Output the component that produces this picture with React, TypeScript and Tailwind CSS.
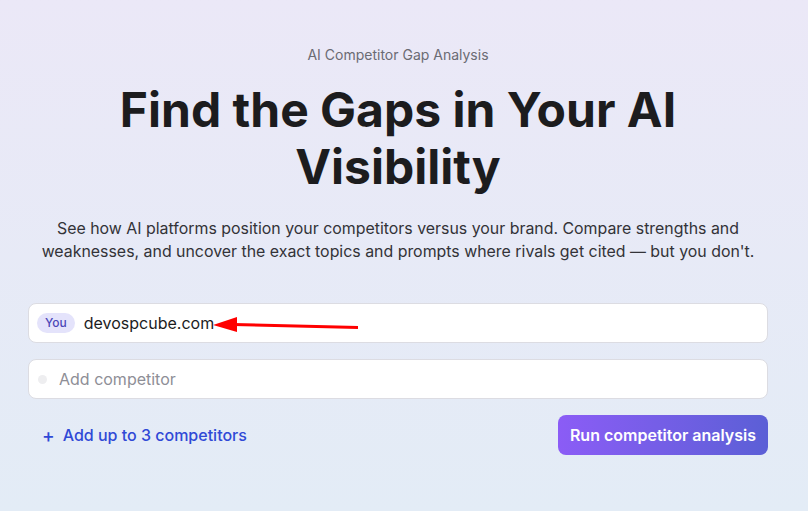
import React, { useState } from "react";

const App: React.FC = () => {
  const [competitor, setCompetitor] = useState("");

  return (
    <div
      className="min-h-[511px] w-full bg-gradient-to-b from-[#ebe8f7] to-[#e3ecf6] text-[#1c1c1e]"
      style={{ fontFamily: "Inter, 'Noto Sans', sans-serif" }}
    >
      <div className="ml-[28px] flex w-[740px] flex-col items-center pt-[45px]">
        <p className="text-[14px] leading-[20px] text-[#6b6b73]">AI Competitor Gap Analysis</p>

        <h1 className="mt-[16px] text-center text-[48px] font-bold leading-[57px] text-[#1c1c1e]">
          Find the Gaps in Your AI
          <br />
          Visibility
        </h1>

        <p className="mt-[22px] text-center text-[15.9px] leading-[23px] text-[#333338]">
          See how AI platforms position your competitors versus your brand. Compare strengths and
          weaknesses, and uncover the exact topics and prompts where rivals get cited — but you don't.
        </p>

        <div className="mt-[40px] flex w-full flex-col gap-[16px]">
          <div className="relative flex h-[40px] items-center gap-[9px] rounded-lg border border-[#dcdce2] bg-white px-[8px]">
            <span className="rounded-full bg-[#e4e3fb] px-[8px] py-[2px] text-[12px] font-medium leading-[16px] text-[#4b46b8]">
              You
            </span>
            <span className="text-[16px] text-[#1c1c1e]">devospcube.com</span>
            <svg
              className="absolute left-[184px] top-[12px]"
              width="146"
              height="18"
              viewBox="0 0 146 18"
            >
              <line x1="20" y1="8.5" x2="145" y2="11.5" stroke="#ff0000" strokeWidth="3" />
              <polygon points="0,9 24,1 24,16" fill="#ff0000" />
            </svg>
          </div>

          <div className="flex h-[40px] items-center gap-[12px] rounded-lg border border-[#dcdce2] bg-white px-[8px]">
            <span className="ml-[1px] h-[9px] w-[9px] rounded-full bg-[#eeeef0]" />
            <input
              value={competitor}
              onChange={(e) => setCompetitor(e.target.value)}
              placeholder="Add competitor"
              className="flex-1 bg-transparent text-[16px] text-[#1c1c1e] outline-none placeholder:text-[#8e8e96]"
            />
          </div>
        </div>

        <div className="mt-[16px] flex w-full items-center justify-between">
          <button className="ml-[14px] flex items-center gap-[8px] text-[16px] font-medium text-[#3049d6]">
            <span className="text-[19px] leading-none">+</span>
            Add up to 3 competitors
          </button>
          <button className="h-[40px] rounded-lg bg-gradient-to-r from-[#8b5cf6] to-[#5b5fd6] px-[12px] text-[16px] font-semibold text-white">
            Run competitor analysis
          </button>
        </div>
      </div>
    </div>
  );
};

export default App;
